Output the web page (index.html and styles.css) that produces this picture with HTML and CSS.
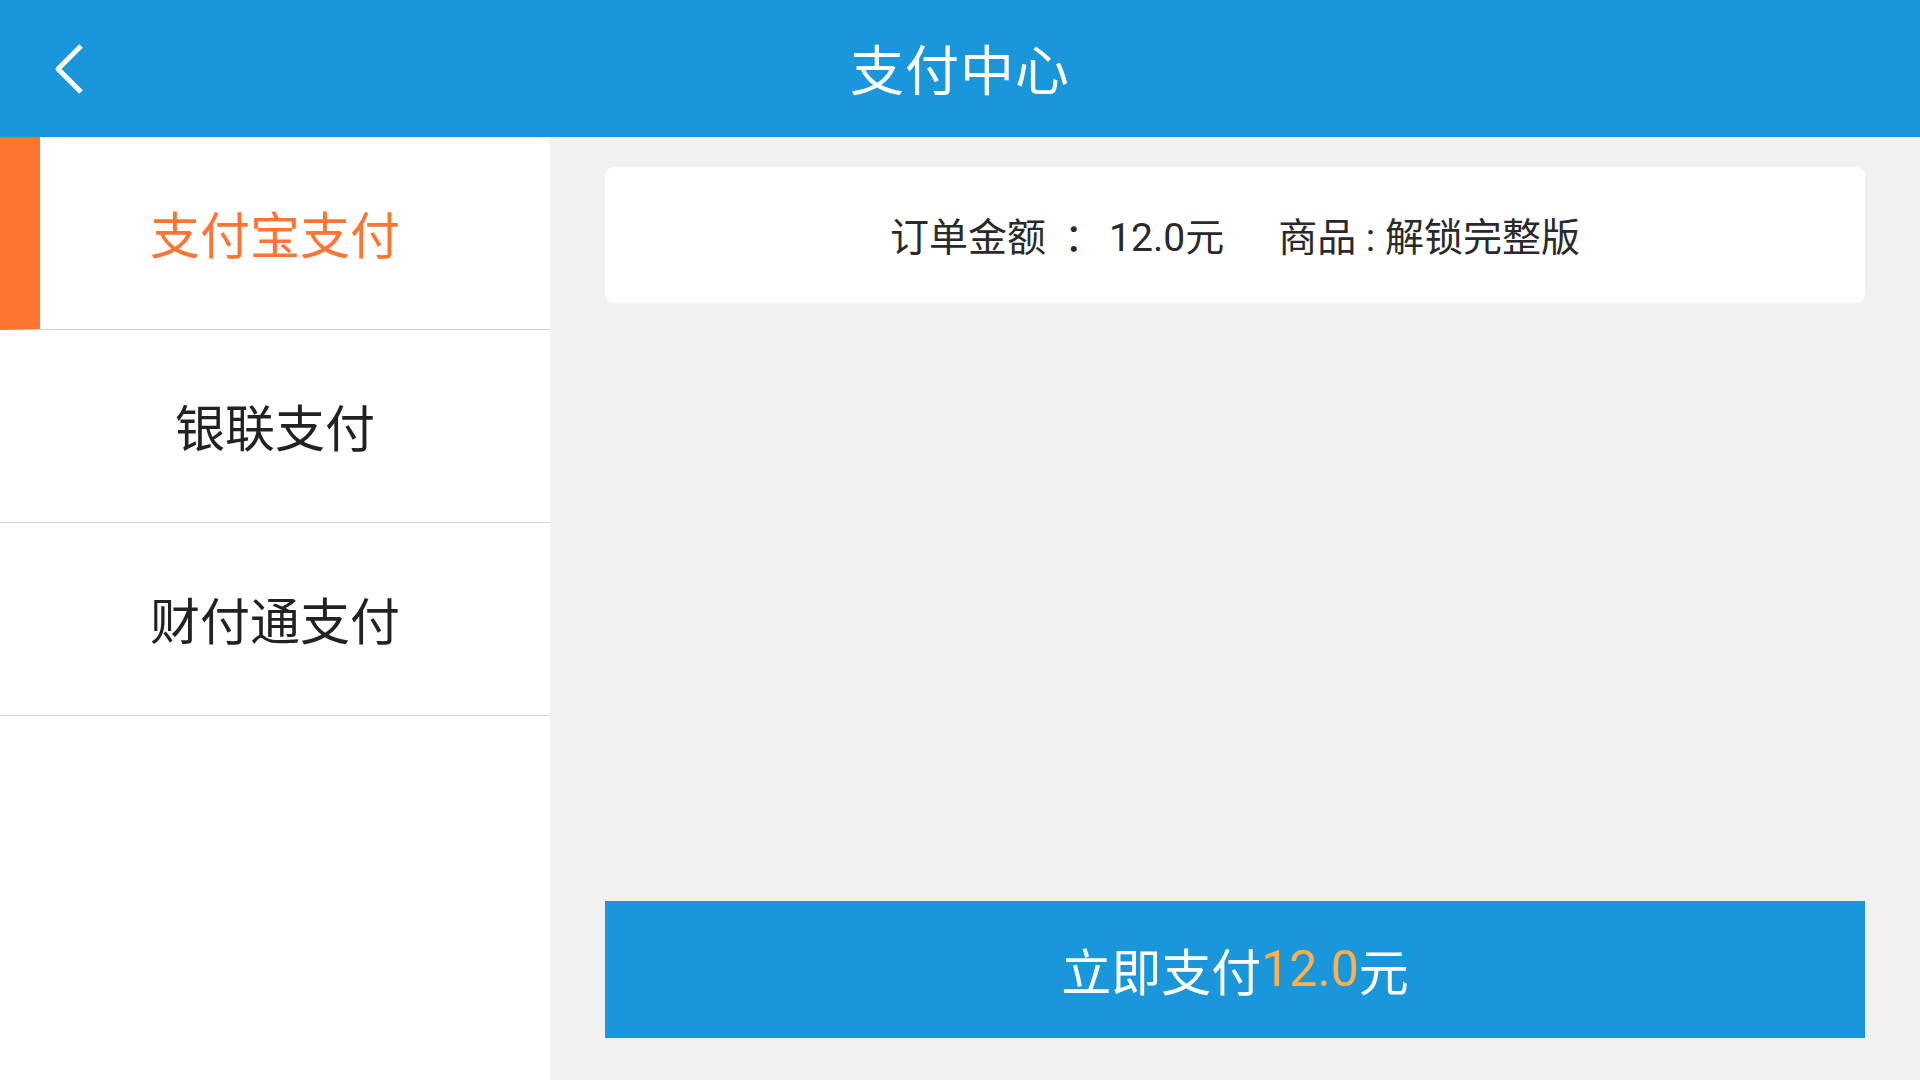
FILE: index.html
```html
<!DOCTYPE html>
<html lang="zh-CN">
<head>
<meta charset="utf-8">
<title>支付中心</title>
<link rel="stylesheet" href="styles.css">
</head>
<body>
<div class="app">
  <header class="topbar">
    <button class="back" aria-label="返回">
      <svg width="44" height="60" viewBox="0 0 44 60"><polyline points="37,6 14,29 37,52" fill="none" stroke="#fff" stroke-width="5" stroke-linecap="butt" stroke-linejoin="round"/></svg>
    </button>
    <h1 class="title">支付中心</h1>
  </header>
  <div class="main">
    <nav class="sidebar">
      <div class="item active">支付宝支付</div>
      <div class="item">银联支付</div>
      <div class="item">财付通支付</div>
    </nav>
    <section class="content">
      <div class="order">
        <span>订单金额</span><span class="colon">：</span><span class="amount">12.0元</span><span class="goods">商品 : 解锁完整版</span>
      </div>
      <div class="spacer"></div>
      <button class="pay">立即支付<span class="price">12.0</span>元</button>
    </section>
  </div>
</div>
</body>
</html>
```

FILE: styles.css
```css
* { box-sizing: border-box; }
html, body { margin: 0; padding: 0; }
body {
  width: 1920px;
  height: 1080px;
  overflow: hidden;
  font-family: "Roboto", "Noto Sans CJK SC", sans-serif;
  background: #f1f1f1;
}
.app { display: flex; flex-direction: column; height: 1080px; }
.topbar {
  height: 137px;
  background: #1a97db;
  display: flex;
  align-items: center;
  justify-content: center;
  position: relative;
  flex: none;
}
.back {
  position: absolute;
  left: 44px;
  top: 40px;
  background: none;
  border: 0;
  padding: 0;
  width: 44px;
  height: 60px;
}
.back svg { display: block; }
.title {
  margin: 0;
  color: #fff;
  font-weight: 400;
  font-size: 54px;
  font-family: "Noto Sans CJK SC", sans-serif;
  letter-spacing: 1px;
  line-height: 1;
  transform: translateY(-1px);
}
.main { flex: 1; display: flex; min-height: 0; }
.sidebar {
  width: 550px;
  background: #fff;
  flex: none;
  display: flex;
  flex-direction: column;
}
.item {
  height: 193px;
  border-bottom: 1px solid #d4d4d4;
  display: flex;
  align-items: center;
  justify-content: center;
  font-family: "Noto Sans CJK SC", sans-serif;
  font-size: 50px;
  color: #222;
  padding-bottom: 2px;
}
.item.active {
  color: #ff7430;
  border-left: 40px solid #ff7430;
  padding-right: 40px;
}
.content {
  flex: 1;
  padding: 30px 55px 42px 55px;
  display: flex;
  flex-direction: column;
}
.order {
  height: 136px;
  background: #fff;
  border-radius: 9px;
  display: flex;
  align-items: center;
  justify-content: center;
  font-size: 39px;
  color: #2a2a2a;
  padding-bottom: 2px;
}
.colon { margin: 0 6px 0 18px; }
.goods { margin-left: 54px; }
.spacer { flex: 1; }
.pay {
  height: 137px;
  border: 0;
  background: #1a97db;
  color: #fff;
  font-family: "Noto Sans CJK SC", sans-serif;
  font-size: 50px;
  display: flex;
  align-items: center;
  justify-content: center;
  padding: 0 0 2px 0;
}
.price { color: #ffb04c; font-family: "Roboto", sans-serif; }
```
